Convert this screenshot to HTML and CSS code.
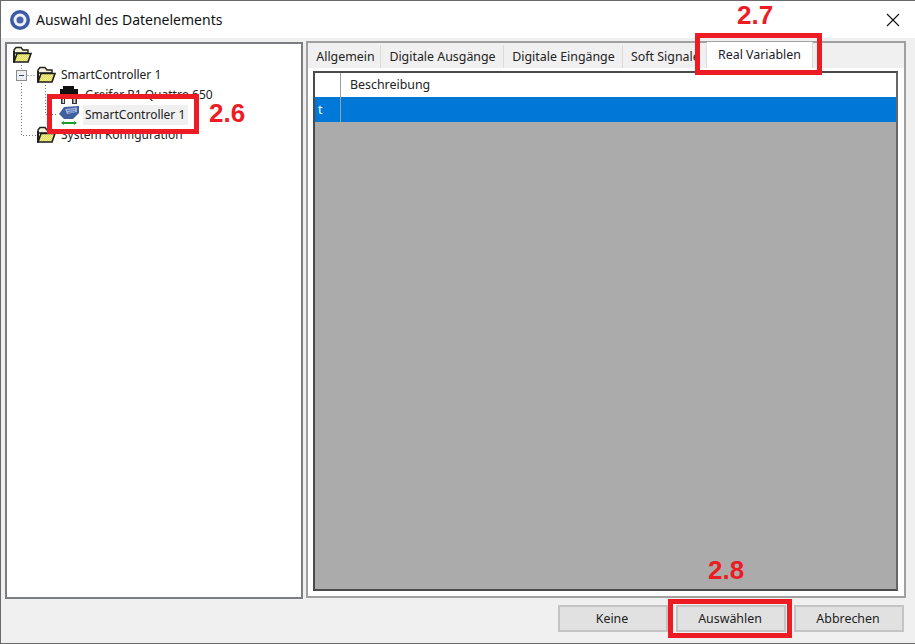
FILE: index.html
```html
<!DOCTYPE html>
<html lang="de">
<head>
    <meta charset="UTF-8">
    <meta name="viewport" content="width=device-width, initial-scale=1.0">
    <title>Auswahl des Datenelements</title>
    <link rel="stylesheet" href="styles.css">
</head>
<body>

    <svg width="0" height="0" class="defs">
        <defs>
            <pattern id="dither" width="2" height="2" patternUnits="userSpaceOnUse">
                <rect width="2" height="2" fill="#dcd94a"/>
                <rect width="1" height="1" fill="#f2f0a0"/>
                <rect x="1" y="1" width="1" height="1" fill="#f2f0a0"/>
            </pattern>
            <symbol id="folder" viewBox="0 0 20 18">
                <path d="M2 4 L4 1.500 H9 L11 4 H16 V7 H2 Z" fill="#f6f4d8" stroke="#222" stroke-width="1.400"/>
                <path d="M1 16.500 V5 H3 V16.500 Z" fill="#222"/>
                <path d="M2 16 L5 7.500 H19 L16 16 Z" fill="url(#dither)" stroke="#1c1c1c" stroke-width="1.600"/>
            </symbol>
        </defs>
    </svg>

    <div class="window">
        <header class="titlebar">
            <svg class="logo" width="20" height="20" viewBox="0 0 20 20">
                <circle cx="10" cy="10" r="10" fill="#3a5aa6"/>
                <circle cx="10" cy="10" r="6.500" fill="#eef1f8"/>
                <circle cx="10" cy="10" r="3.500" fill="#4a63a8"/>
            </svg>
            <span class="title">Auswahl des Datenelements</span>
            <svg class="close" width="14" height="14" viewBox="0 0 14 14">
                <path d="M1 1 L13 13 M13 1 L1 13" stroke="#111" stroke-width="1.100"/>
            </svg>
        </header>

        <main class="content">
            <div class="tree">
                <svg class="tree-lines" width="60" height="100">
                    <path d="M14.500 21 V91.500 H29 M14.500 31.500 H29" stroke="#777" stroke-dasharray="1 2" fill="none"/>
                    <path d="M38.500 41 V70.500 H51" stroke="#777" stroke-dasharray="1 2" fill="none"/>
                </svg>
                <div class="tree-row">
                    <svg class="icon" width="20" height="18"><use href="#folder"/></svg>
                </div>
                <div class="tree-row level-1">
                    <span class="expander"></span>
                    <svg class="icon" width="20" height="18"><use href="#folder"/></svg>
                    <span class="node-text">SmartController 1</span>
                </div>
                <div class="tree-row level-2">
                    <svg class="icon" width="20" height="18" viewBox="0 0 20 18">
                        <path d="M4 0 H15 V3 H19 V9 H1 V3 H4 Z" fill="#111"/>
                        <path d="M2 10 H6 V18 H2 Z M13 10 H18 V18 H13 Z" fill="#333"/>
                        <path d="M3.500 11 H5 V17 H3.500 Z M14.500 11 H16.500 V17 H14.500 Z" fill="#ddd"/>
                    </svg>
                    <span class="node-text">Greifer R1 Quattro 650</span>
                </div>
                <div class="tree-row level-2">
                    <svg class="icon" width="20" height="19" viewBox="0 0 20 19">
                        <path d="M0 8 L5 1 L20 0 V7 L14 13 H5 Z" fill="#3f5f9e"/>
                        <path d="M6 3 L18 1.500 V6 L8 8 Z" fill="#9db2da"/>
                        <path d="M8 4.500 L16 3.500 M9 6.500 L16 5.500" stroke="#4f6fae" stroke-width="0.800"/>
                        <path d="M3 17 H17" stroke="#1e9a2e" stroke-width="2"/>
                        <path d="M2 17 L5 15 V19 Z M18 17 L15 15 V19 Z" fill="#1e9a2e"/>
                    </svg>
                    <span class="node-text selected">SmartController 1</span>
                </div>
                <div class="tree-row level-1">
                    <span class="expander-space"></span>
                    <svg class="icon" width="20" height="18"><use href="#folder"/></svg>
                    <span class="node-text">System Konfiguration</span>
                </div>
            </div>

            <div class="tabs">
                <div class="tab-strip">
                    <span class="tab tab-allgemein">Allgemein</span>
                    <span class="tab tab-ausgaenge">Digitale Ausgänge</span>
                    <span class="tab tab-eingaenge">Digitale Eingänge</span>
                    <span class="tab tab-soft">Soft Signale</span>
                    <span class="tab tab-active">Real Variablen</span>
                </div>
                <div class="tab-page">
                    <div class="grid">
                        <div class="grid-head">
                            <span class="row-head"></span>
                            <span class="col-head">Beschreibung</span>
                        </div>
                        <div class="grid-row">
                            <span class="row-head">t</span>
                            <span class="col-cell"></span>
                        </div>
                    </div>
                </div>
            </div>
        </main>

        <footer class="buttons">
            <button type="button" class="btn">Keine</button>
            <button type="button" class="btn">Auswählen</button>
            <button type="button" class="btn">Abbrechen</button>
        </footer>
    </div>

    <!-- Anmerkungen im Screenshot -->
    <div class="mark mark-tree"></div>
    <div class="mark mark-tab"></div>
    <div class="mark mark-btn"></div>
    <span class="mark-label label-tree">2.6</span>
    <span class="mark-label label-tab">2.7</span>
    <span class="mark-label label-btn">2.8</span>

</body>
</html>
```

FILE: styles.css
```css
html, body {
    margin: 0;
    height: 100%;
    overflow: hidden;
}
body {
    position: relative;
    font-family: "Noto Sans", "Open Sans", sans-serif;
    font-size: 12.4px;
    color: #222;
    background: #f0f0f0;
}
.defs {
    display: block;
    height: 0;
}
.window {
    box-sizing: border-box;
    width: 915px;
    height: 644px;
    display: flex;
    flex-direction: column;
    border-top: 1px solid #6a6a6a;
    border-left: 1px solid #6a6a6a;
    border-bottom: 1px solid #6a6a6a;
}
.titlebar {
    height: 37px;
    flex: none;
    display: flex;
    align-items: center;
    padding: 0 15px 0 9px;
    background: #fff;
}
.logo {
    flex: none;
}
.title {
    margin-left: 6px;
    font-size: 14px;
    color: #111;
}
.close {
    margin-left: auto;
}
.content {
    flex: none;
    display: flex;
    gap: 3px;
    padding: 3px 9px 0 4px;
    height: 557px;
}
.tree {
    position: relative;
    box-sizing: border-box;
    width: 298px;
    height: 557px;
    margin-top: 1px;
    padding: 1px 0 0 5px;
    background: #fff;
    border: 2px solid #7a7d82;
}
.tree-lines {
    position: absolute;
    left: 0;
    top: 0;
}
.tree-row {
    position: relative;
    height: 20px;
    display: flex;
    align-items: center;
    white-space: nowrap;
    font-size: 12px;
}
.level-1 {
    padding-left: 4px;
}
.level-2 {
    padding-left: 47px;
}
.icon {
    flex: none;
    position: relative;
}
.expander {
    box-sizing: border-box;
    position: relative;
    flex: none;
    width: 11px;
    height: 11px;
    margin-right: 9px;
    background: linear-gradient(#33467a, #33467a) center / 5px 1px no-repeat, #eceef3;
    border: 1px solid #8c8c8c;
}
.expander-space {
    flex: none;
    width: 20px;
}
.node-text {
    margin-left: 3px;
    line-height: 20px;
    padding: 0 2px;
    color: #222;
}
.level-2 .node-text {
    margin-left: 4px;
}
.selected {
    background: #f0f0f0;
    padding-right: 3px;
}
.tabs {
    flex: none;
    width: 600px;
    height: 557px;
    display: flex;
    flex-direction: column;
    position: relative;
}
.tab-strip {
    flex: none;
    height: 27px;
    padding-left: 3px;
    display: flex;
    align-items: flex-end;
    border-top: 2px solid #a0a0a0;
    border-left: 2px solid #a0a0a0;
    border-right: 2px solid #a0a0a0;
    box-sizing: border-box;
}
.tab {
    box-sizing: border-box;
    height: 23px;
    margin-right: 1px;
    line-height: 24px;
    text-align: center;
    background: #f0f0f0;
    border-right: 1px solid #dcdcdc;
    white-space: nowrap;
    overflow: hidden;
}
.tab-allgemein { width: 70px; }
.tab-ausgaenge { width: 122px; }
.tab-eingaenge { width: 118px; }
.tab-soft { width: 83px; text-align: left; padding-left: 7px; }
.tab-active {
    width: 106px;
    height: 26px;
    margin-left: -1px;
    line-height: 26px;
    background: #fff;
    color: #1b1b2a;
}
.tab-page {
    flex: 1;
    box-sizing: border-box;
    padding: 3px 6px 5px 5px;
    background: #fff;
    border: 2px solid #a0a0a0;
    border-top: 0;
    background-clip: padding-box;
    display: flex;
}
.grid {
    flex: 1;
    box-sizing: border-box;
    background: #ababab;
    border: 2px solid #4a4a4a;
    border-right-color: #666;
}
.grid-head,
.grid-row {
    display: flex;
    height: 25px;
    align-items: stretch;
}
.grid-head {
    height: 24px;
    background: #fff;
    line-height: 24px;
}
.grid-row {
    background: #0078d7;
    color: #fff;
    line-height: 25px;
}
.row-head {
    box-sizing: border-box;
    width: 26px;
    padding-left: 3px;
    border-right: 1px solid #a0a0a0;
}
.col-head {
    padding-left: 9px;
}
.buttons {
    flex: 1;
    display: flex;
    justify-content: flex-end;
    gap: 8px;
    padding: 7px 11px 0 0;
}
.btn {
    box-sizing: border-box;
    width: 110px;
    height: 27px;
    padding: 0 2px 0 0;
    font: inherit;
    color: #222;
    background: #e1e1e1;
    border: 2px solid #c4c4c4;
}
.mark {
    position: absolute;
    box-sizing: border-box;
    border: 5px solid #ed1c24;
}
.mark-tree {
    left: 47px;
    top: 94px;
    width: 152px;
    height: 40px;
}
.mark-tab {
    left: 695px;
    top: 33px;
    width: 127px;
    height: 42px;
}
.mark-btn {
    left: 668px;
    top: 599px;
    width: 124px;
    height: 39px;
}
.mark-label {
    position: absolute;
    font-family: "Liberation Sans", Arial, sans-serif;
    font-size: 26px;
    line-height: 30px;
    font-weight: bold;
    color: #ed1c24;
}
.label-tree {
    left: 209px;
    top: 98px;
}
.label-tab {
    left: 737px;
    top: 0;
}
.label-btn {
    left: 708px;
    top: 555px;
}
```
